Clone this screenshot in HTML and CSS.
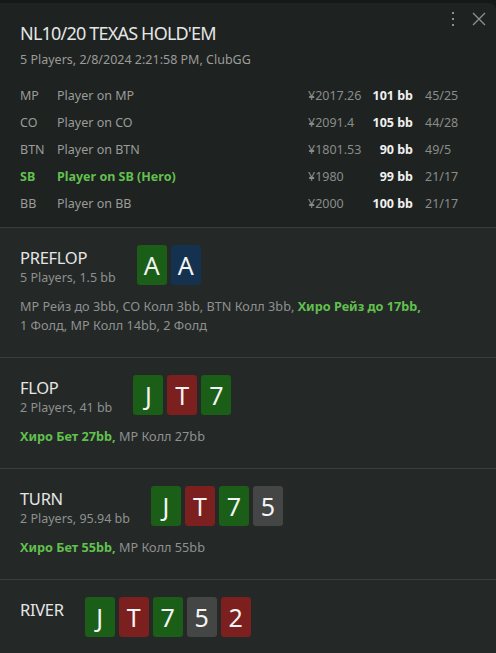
FILE: index.html
```html
<!DOCTYPE html>
<html>

<head>
    <title>Hand History</title>
    <link rel="stylesheet" href="styles.css">
</head>

<body>
    <div class="panel">
        <div class="head">
            <div class="tools">
                <span class="kebab"><i></i><i></i><i></i></span>
                <svg class="close" width="14" height="14" viewBox="0 0 14 14">
                    <path d="M1 1L13 13M13 1L1 13" stroke="#8c8f8e" stroke-width="1.4" fill="none" />
                </svg>
            </div>
            <h1 class="title">NL10/20 TEXAS HOLD'EM</h1>
            <div class="sub">5 Players, 2/8/2024 2:21:58 PM, ClubGG</div>

            <div class="players">
                <div class="row">
                    <span>MP</span><span>Player on MP</span><span class="amt">¥2017.26</span><span class="bb">101 bb</span><span class="ratio">45/25</span>
                </div>
                <div class="row">
                    <span>CO</span><span>Player on CO</span><span class="amt">¥2091.4</span><span class="bb">105 bb</span><span class="ratio">44/28</span>
                </div>
                <div class="row">
                    <span>BTN</span><span>Player on BTN</span><span class="amt">¥1801.53</span><span class="bb">90 bb</span><span class="ratio">49/5</span>
                </div>
                <div class="row hero">
                    <span>SB</span><span>Player on SB (Hero)</span><span class="amt">¥1980</span><span class="bb">99 bb</span><span class="ratio">21/17</span>
                </div>
                <div class="row">
                    <span>BB</span><span>Player on BB</span><span class="amt">¥2000</span><span class="bb">100 bb</span><span class="ratio">21/17</span>
                </div>
            </div>
        </div>

        <div class="street">
            <div class="street-top">
                <div class="street-info">
                    <div class="street-name">PREFLOP</div>
                    <div class="street-sub">5 Players, 1.5 bb</div>
                </div>
                <div class="cards">
                    <span class="card green">A</span>
                    <span class="card blue">A</span>
                </div>
            </div>
            <div class="actions">MP Рейз до 3bb, CO Колл 3bb, BTN Колл 3bb, <b>Хиро Рейз до 17bb,</b><br>1 Фолд, MP Колл 14bb, 2 Фолд</div>
        </div>

        <div class="street">
            <div class="street-top">
                <div class="street-info">
                    <div class="street-name">FLOP</div>
                    <div class="street-sub">2 Players, 41 bb</div>
                </div>
                <div class="cards">
                    <span class="card green">J</span>
                    <span class="card red">T</span>
                    <span class="card green">7</span>
                </div>
            </div>
            <div class="actions"><b>Хиро Бет 27bb,</b> MP Колл 27bb</div>
        </div>

        <div class="street">
            <div class="street-top">
                <div class="street-info">
                    <div class="street-name">TURN</div>
                    <div class="street-sub">2 Players, 95.94 bb</div>
                </div>
                <div class="cards">
                    <span class="card green">J</span>
                    <span class="card red">T</span>
                    <span class="card green">7</span>
                    <span class="card gray">5</span>
                </div>
            </div>
            <div class="actions"><b>Хиро Бет 55bb,</b> MP Колл 55bb</div>
        </div>

        <div class="street">
            <div class="street-top">
                <div class="street-info">
                    <div class="street-name">RIVER</div>
                </div>
                <div class="cards">
                    <span class="card green">J</span>
                    <span class="card red">T</span>
                    <span class="card green">7</span>
                    <span class="card gray">5</span>
                    <span class="card red">2</span>
                </div>
            </div>
        </div>
    </div>
</body>

</html>
```

FILE: styles.css
```css
html, body {
  margin: 0;
  padding: 0;
}

body {
  background-color: #161918;
  font-family: "Noto Sans", "Open Sans", sans-serif;
  color: #9a9c9b;
  height: 653px;
  overflow: hidden;
}

.panel {
  margin-top: 3px;
  border-top-right-radius: 8px;
  background-color: #242827;
  min-height: 650px;
}

/* header with hand info */
.head {
  position: relative;
  background-color: #1e2220;
  padding: 18px 20px 10px 20px;
  border-bottom: 1px solid #3a3d3c;
  border-top-right-radius: 8px;
}

.tools {
  position: absolute;
  top: 9px;
  right: 10px;
  display: flex;
  align-items: center;
  gap: 18px;
}

.kebab {
  display: flex;
  flex-direction: column;
  gap: 4px;
}

.kebab i {
  display: block;
  width: 2px;
  height: 2px;
  background-color: #8c8f8e;
}

.title {
  margin: 0;
  font-size: 18px;
  line-height: 24px;
  font-weight: 400;
  letter-spacing: -0.8px;
  color: #e4e6e5;
}

.sub {
  margin-top: 6px;
  font-size: 12.5px;
  line-height: 18px;
  color: #9a9c9b;
}

.players {
  margin-top: 13px;
}

.row {
  display: grid;
  grid-template-columns: 37px 1fr 60px 45px 63px;
  height: 27px;
  align-items: center;
  font-size: 12.5px;
  color: #9a9c9b;
}

.row .amt {
  color: #8a8c8b;
}

.row .bb {
  text-align: right;
  font-weight: 700;
  color: #f0f0f0;
}

.row .ratio {
  padding-left: 12px;
  color: #8a8c8b;
}

.row.hero span:nth-child(1),
.row.hero span:nth-child(2) {
  color: #62c04f;
  font-weight: 700;
}

/* streets */
.street {
  padding: 17px 20px 22px 20px;
  border-bottom: 1px solid #3a3d3c;
}

.street:last-child {
  border-bottom: none;
}

.street-top {
  display: flex;
  align-items: flex-start;
  gap: 21px;
}

.street-name {
  font-size: 16.5px;
  line-height: 25px;
  letter-spacing: -0.3px;
  color: #e4e6e5;
}

.street-sub {
  font-size: 12.5px;
  line-height: 15px;
  color: #8e9190;
}

.cards {
  display: flex;
  gap: 4px;
}

.card {
  width: 30px;
  height: 40px;
  border-radius: 3px;
  display: flex;
  align-items: center;
  justify-content: center;
  font-size: 25px;
  color: #f4f4f4;
}

.green {
  background-color: #1b5e18;
}

.red {
  background-color: #7b1f1f;
}

.blue {
  background-color: #14324f;
}

.gray {
  background-color: #444646;
}

.actions {
  margin-top: 12px;
  font-size: 12.7px;
  line-height: 19px;
  color: #8e9190;
}

.actions b {
  color: #62c04f;
}
```
